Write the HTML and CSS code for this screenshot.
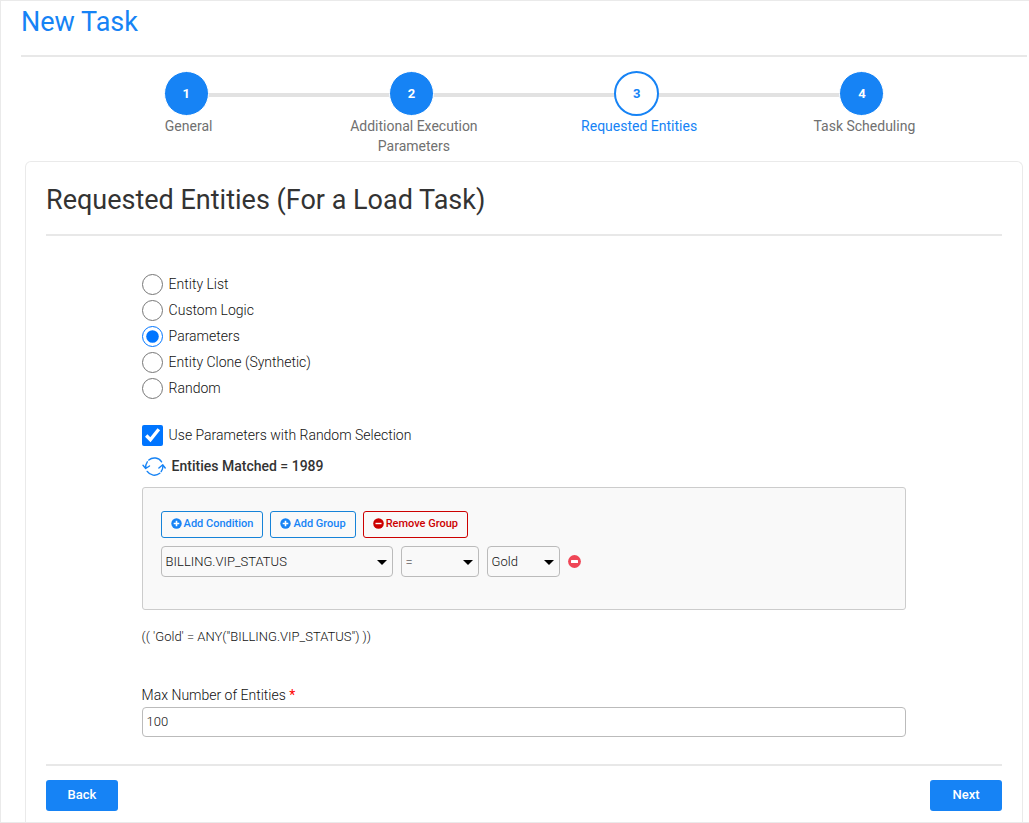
FILE: index.html
```html
<!DOCTYPE html>
<html lang="en">
<head>
<meta charset="utf-8">
<meta name="viewport" content="width=device-width, initial-scale=1">
<title>New Task</title>
<link rel="stylesheet" href="styles.css">
</head>
<body>
<main class="page">
  <h1 class="page-title">New Task</h1>

  <ol class="steps">
    <li class="step"><span class="step-dot">1</span><span class="step-label">General</span></li>
    <li class="step"><span class="step-dot">2</span><span class="step-label">Additional Execution Parameters</span></li>
    <li class="step current" aria-current="step"><span class="step-dot">3</span><span class="step-label">Requested Entities</span></li>
    <li class="step"><span class="step-dot">4</span><span class="step-label">Task Scheduling</span></li>
  </ol>

  <form class="panel">
    <h2 class="panel-title">Requested Entities (For a Load Task)</h2>

    <div class="fields">
      <div class="choices" role="radiogroup" aria-label="Selection method">
        <label class="choice"><input type="radio" name="method"><span>Entity List</span></label>
        <label class="choice"><input type="radio" name="method"><span>Custom Logic</span></label>
        <label class="choice"><input type="radio" name="method" checked><span>Parameters</span></label>
        <label class="choice"><input type="radio" name="method"><span>Entity Clone (Synthetic)</span></label>
        <label class="choice"><input type="radio" name="method"><span>Random</span></label>
      </div>

      <label class="choice"><input type="checkbox" checked><span>Use Parameters with Random Selection</span></label>

      <div class="matched">
        <button type="button" class="icon-button" aria-label="Refresh">
          <svg width="24" height="20" viewBox="0 0 24 20" fill="none" stroke="#1683f5" stroke-width="1.4" stroke-linecap="round" stroke-linejoin="round">
            <path d="M6.800 4A8.700 8.700 0 0 1 19.600 5.800M1 9.300l2.700 3.200 3.800-2.500M3.700 12.500C3.300 9.800 4 7.600 5.300 5.800"/>
            <path d="M5.200 15.400A8.700 8.700 0 0 0 17.800 17.300M16.900 12l3.900-3.200L23.200 12M20.800 8.800C21.100 11.400 20.600 13.600 19.200 15.500"/>
          </svg>
        </button>
        <span>Entities Matched = 1989</span>
      </div>

      <div class="builder">
        <div class="builder-row">
          <button type="button" class="outline-button">
            <svg width="11" height="11" viewBox="0 0 11 11"><circle cx="5.500" cy="5.500" r="5.200" fill="currentColor"/><path d="M5.500 2.700v5.600M2.700 5.500h5.600" stroke="#fff" stroke-width="1.600"/></svg>
            Add Condition
          </button>
          <button type="button" class="outline-button">
            <svg width="11" height="11" viewBox="0 0 11 11"><circle cx="5.500" cy="5.500" r="5.200" fill="currentColor"/><path d="M5.500 2.700v5.600M2.700 5.500h5.600" stroke="#fff" stroke-width="1.600"/></svg>
            Add Group
          </button>
          <button type="button" class="outline-button danger">
            <svg width="11" height="11" viewBox="0 0 11 11"><circle cx="5.500" cy="5.500" r="5.300" fill="currentColor"/><path d="M2.500 5.500h6" stroke="#fff" stroke-width="1.400"/></svg>
            Remove Group
          </button>
        </div>
        <div class="builder-row">
          <span class="select field-name"><select aria-label="Field"><option>BILLING.VIP_STATUS</option></select></span>
          <span class="select operator"><select aria-label="Operator"><option>=</option></select></span>
          <span class="select value"><select aria-label="Value"><option>Gold</option></select></span>
          <button type="button" class="icon-button" aria-label="Remove condition">
            <svg width="13" height="13" viewBox="0 0 13 13"><circle cx="6.500" cy="6.500" r="6.400" fill="#ef4656"/><rect x="3" y="5" width="7" height="3" rx=".5" fill="#fff"/></svg>
          </button>
        </div>
      </div>

      <p class="expression">(( 'Gold' = ANY("BILLING.VIP_STATUS") ))</p>

      <label class="field-label" for="max">Max Number of Entities <span class="required">*</span></label>
      <input class="text-input" id="max" type="text" value="100" required>
    </div>

    <div class="actions">
      <button type="button" class="primary-button">Back</button>
      <button type="button" class="primary-button">Next</button>
    </div>
  </form>
</main>
</body>
</html>
```
FILE: styles.css
```css
* {
  box-sizing: border-box;
}

body {
  margin: 0;
  font-family: Roboto, "Liberation Sans", sans-serif;
  font-size: 14px;
  line-height: 20px;
  color: #333;
  background: #fff;
}

button,
input,
select {
  font: inherit;
  color: inherit;
}

.page {
  display: flex;
  flex-direction: column;
  min-height: 100vh;
  padding: 0 2px 0 20px;
  border: 1px solid #eaeaea;
  border-right: 0;
}

.page-title {
  margin: 0;
  height: 56px;
  padding-top: 3px;
  border-bottom: 2px solid #e8e8e8;
  font-size: 27px;
  font-weight: 400;
  line-height: 36px;
  color: #1683f5;
}

.steps {
  display: grid;
  grid-template-columns: repeat(4, 1fr);
  margin: 0 50px 0 55px;
  padding: 14px 0 5px;
  list-style: none;
}

.step {
  position: relative;
  display: flex;
  flex-direction: column;
  align-items: center;
  color: #707070;
}

.step:not(:last-child)::before {
  content: "";
  position: absolute;
  top: 22px;
  left: 50%;
  width: 100%;
  height: 4px;
  background: #e2e2e2;
}

.step-dot {
  z-index: 1;
  display: grid;
  place-items: center;
  width: 45px;
  height: 45px;
  margin-right: 5px;
  border: 1px solid #fff;
  border-radius: 50%;
  background: #1683f5;
  color: #fff;
  font-size: 13px;
  font-weight: 700;
}

.current .step-dot {
  border: 2px solid #1683f5;
  background: #fff;
  color: #1683f5;
}

.step-label {
  max-width: 150px;
  text-align: center;
}

.current {
  color: #1683f5;
}

.panel {
  flex: 1;
  margin: 0 4px;
  padding: 0 20px 11px;
  border: 1px solid #eaeaea;
  border-bottom: 0;
  border-radius: 6px 6px 0 0;
}

.panel-title {
  margin: 0;
  padding: 20px 0 16px;
  border-bottom: 2px solid #e8e8e8;
  font-size: 27px;
  font-weight: 400;
  line-height: 36px;
}

.fields {
  padding: 35px 10% 27px;
  font-weight: 300;
  color: #111;
}

.choices {
  margin-bottom: 21px;
}

.choice {
  display: flex;
  align-items: center;
  gap: 6px;
  height: 26px;
}

.choice input {
  width: 21px;
  height: 21px;
  margin: 0;
  accent-color: #0075ff;
}

.matched {
  display: flex;
  align-items: center;
  gap: 6px;
  height: 36px;
  font-weight: 500;
  color: #333;
}

.icon-button {
  display: flex;
  padding: 0;
  border: 0;
  background: none;
}

.builder {
  display: flex;
  flex-direction: column;
  gap: 8px;
  margin-top: 3px;
  padding: 23px 18px 32px;
  border: 1px solid #ccc;
  border-radius: 3px;
  background: #f9f9f9;
}

.builder-row {
  display: flex;
  align-items: center;
  gap: 7px;
}

.builder-row + .builder-row {
  gap: 8px;
}

.outline-button {
  display: flex;
  align-items: center;
  gap: 2px;
  height: 27px;
  padding: 0 9px 2px;
  border: 1px solid #1683d8;
  border-radius: 3px;
  background: #f9f9f9;
  color: #1683f5;
  font-size: 11px;
  font-weight: 500;
}

.danger {
  border-color: #c00;
  color: #c00;
}

.select {
  position: relative;
  height: 31px;
}

.select::after {
  content: "";
  position: absolute;
  top: 14px;
  right: 6px;
  border: 5px solid transparent;
  border-top-color: #000;
  border-bottom: 0;
  pointer-events: none;
}

.select select {
  appearance: none;
  width: 100%;
  height: 100%;
  padding: 0 4px;
  border: 1px solid #bbb;
  border-radius: 4px;
  background: #f9f9f9;
  font-size: 13px;
}

.field-name {
  width: 232px;
}

.operator {
  width: 78px;
}

.value {
  width: 73px;
}

.expression {
  margin: 17px 0 38px;
  font-size: 13px;
}

.field-label {
  display: block;
  padding-bottom: 2px;
}

.required {
  color: #f00;
  font-weight: 400;
}

.text-input {
  display: block;
  width: 100%;
  height: 30px;
  padding: 0 4px 2px;
  border: 1px solid #bbb;
  border-radius: 4px;
  background: #fff;
  font-size: 13px;
}

.actions {
  display: flex;
  justify-content: space-between;
  padding-top: 14px;
  border-top: 2px solid #e8e8e8;
}

.primary-button {
  width: 72px;
  height: 31px;
  padding: 0 0 2px;
  border: 0;
  border-radius: 3px;
  background: #1683f5;
  color: #fff;
  font-size: 13px;
  font-weight: 500;
}
```
